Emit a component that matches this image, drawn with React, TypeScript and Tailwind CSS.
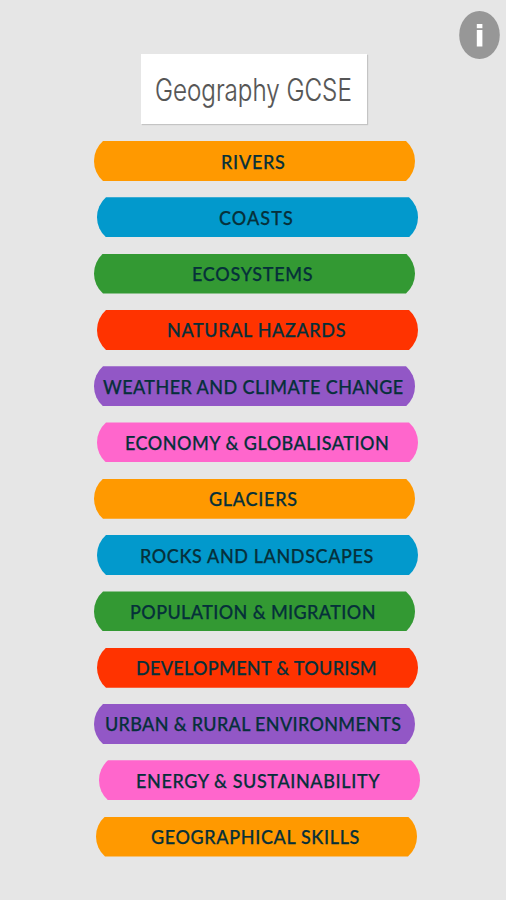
const topics = [
  { name: 'RIVERS', color: 'bg-[#ff9900]', pos: 'ml-[94px]', text: 'pl-[127px]', tracking: 'tracking-[0.8px]' },
  { name: 'COASTS', color: 'bg-[#0299cc]', pos: 'ml-[97px]', text: 'pl-[122px]', tracking: 'tracking-[1.2px]' },
  { name: 'ECOSYSTEMS', color: 'bg-[#339933]', pos: 'ml-[94px]', text: 'pl-[98px]', tracking: 'tracking-[0.8px]' },
  { name: 'NATURAL HAZARDS', color: 'bg-[#ff3300]', pos: 'ml-[97px]', text: 'pl-[69.5px]', tracking: 'tracking-[0.7px]' },
  { name: 'WEATHER AND CLIMATE CHANGE', color: 'bg-[#9257c6]', pos: 'ml-[94px]', text: 'pl-[9px]', tracking: 'tracking-[0.47px]' },
  { name: 'ECONOMY & GLOBALISATION', color: 'bg-[#ff66cc]', pos: 'ml-[97px]', text: 'pl-[27.5px]', tracking: 'tracking-[0.55px]' },
  { name: 'GLACIERS', color: 'bg-[#ff9900]', pos: 'ml-[94px]', text: 'pl-[115px]', tracking: 'tracking-[0.8px]' },
  { name: 'ROCKS AND LANDSCAPES', color: 'bg-[#0299cc]', pos: 'ml-[97px]', text: 'pl-[42.5px]', tracking: 'tracking-[0.67px]' },
  { name: 'POPULATION & MIGRATION', color: 'bg-[#339933]', pos: 'ml-[94px]', text: 'pl-[36px]', tracking: 'tracking-[0.44px]' },
  { name: 'DEVELOPMENT & TOURISM', color: 'bg-[#ff3300]', pos: 'ml-[97px]', text: 'pl-[39px]', tracking: 'tracking-[0.36px]' },
  { name: 'URBAN & RURAL ENVIRONMENTS', color: 'bg-[#9257c6]', pos: 'ml-[94px]', text: 'pl-[11px]', tracking: 'tracking-[0.36px]' },
  { name: 'ENERGY & SUSTAINABILITY', color: 'bg-[#ff66cc]', pos: 'ml-[99px]', text: 'pl-[37px]', tracking: 'tracking-[0.68px]' },
  { name: 'GEOGRAPHICAL SKILLS', color: 'bg-[#ff9900]', pos: 'ml-[96px]', text: 'pl-[54.5px]', tracking: 'tracking-[0.7px]' },
];

export default function App() {
  return (
    <div className="relative w-[506px] h-[900px] overflow-hidden bg-[#e6e6e6] pt-[54px]">
      <button className="absolute left-[459px] top-[11px] w-[41px] h-[48px]" aria-label="Info">
        <svg viewBox="0 0 41 48" className="w-full h-full">
          <ellipse cx="20.5" cy="24" rx="20.3" ry="24" fill="#979797" />
          <rect x="17.8" y="13" width="5.6" height="4.2" fill="#fff" />
          <rect x="17.8" y="19" width="5.6" height="16.5" fill="#fff" />
        </svg>
      </button>

      <h1 className="ml-[141px] w-[226px] h-[70px] bg-white flex items-center shadow-[1px_1px_1px_#c4c4c4] pl-[14px]">
        <span className="origin-left scale-x-[0.78] whitespace-nowrap font-['Inter','Liberation_Sans',sans-serif] font-light text-[31px] leading-none text-[#555] [-webkit-text-stroke:0.2px_#555]">
          Geography GCSE
        </span>
      </h1>

      <ul className="mt-[17px] flex flex-col gap-[16.3px]">
        {topics.map((topic) => (
          <li key={topic.name} className={topic.pos}>
            <button
              className={`flex w-[321px] h-[40px] items-center pb-px [clip-path:path('M9_0H312A26.7_26.7_0_0_1_312_40H9A26.7_26.7_0_0_1_9_0Z')] ${topic.color} ${topic.text}`}
            >
              <span
                className={`origin-left scale-x-90 whitespace-nowrap font-['Lato',sans-serif] font-medium text-[20px] leading-none text-[#06303a] [-webkit-text-stroke:0.25px_#06303a] ${topic.tracking}`}
              >
                {topic.name}
              </span>
            </button>
          </li>
        ))}
      </ul>
    </div>
  );
}
